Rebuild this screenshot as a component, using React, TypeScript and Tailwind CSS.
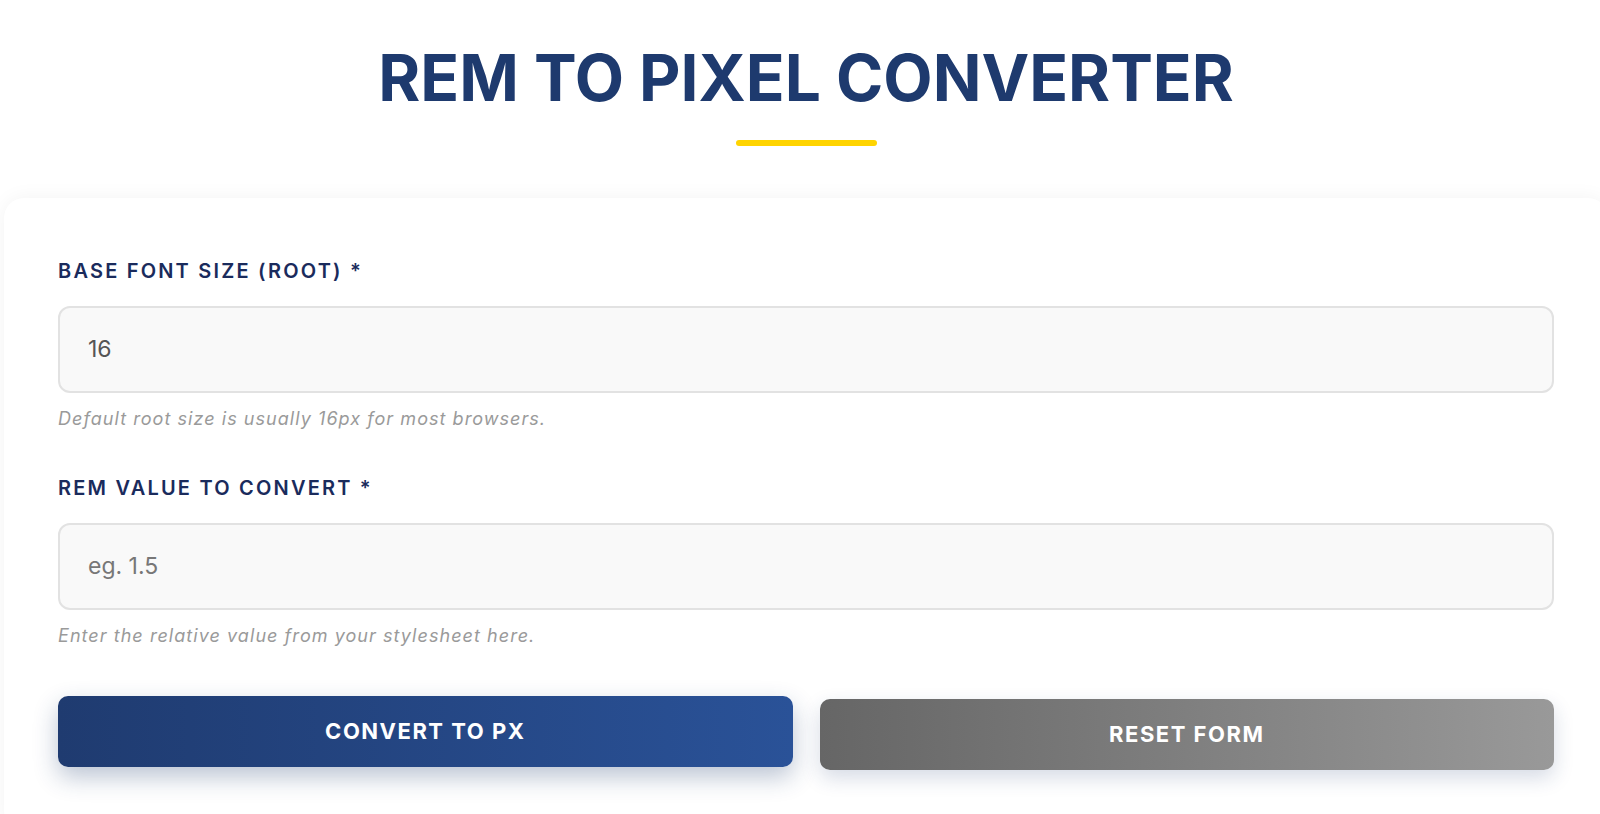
import React from 'react';

const font = { fontFamily: 'Inter, "Noto Sans", sans-serif' };

function Field({ label, value, placeholder, help }: { label: string; value?: string; placeholder?: string; help: string }) {
  return (
    <div className="flex flex-col">
      <label className="text-[20px] font-semibold tracking-[2.2px] text-[#1a2b5c] leading-none">{label}</label>
      <input
        defaultValue={value}
        placeholder={placeholder}
        className="mt-[25px] h-[87px] w-full rounded-[12px] border-2 border-[#e2e2e2] bg-[#f9f9f9] px-[28px] text-[23px] text-[#555] placeholder:text-[#777] outline-none"
      />
      <p className="mt-[17px] text-[18px] italic tracking-[1.05px] text-[#9a9a9a] leading-none">{help}</p>
    </div>
  );
}

export default function App() {
  return (
    <div className="h-screen w-full overflow-hidden bg-white" style={font}>
      <div className="w-[1612px]">
        <div className="pt-[40px]">
          <h1 className="text-center text-[64px] font-bold leading-[1.2] text-[#1e3a6e]">
            REM TO PIXEL CONVERTER
          </h1>
          <div className="mx-auto mt-[23px] h-[6px] w-[141px] rounded-full bg-[#ffd400]" />
        </div>
        <div className="mx-[4px] mt-[52px] rounded-[20px] bg-white px-[54px] pt-[63px] pb-[60px] shadow-[0_0_20px_rgba(0,0,0,0.05)]">
          <div className="flex flex-col gap-[50px]">
            <Field label="BASE FONT SIZE (ROOT) *" value="16" help="Default root size is usually 16px for most browsers." />
            <Field label="REM VALUE TO CONVERT *" placeholder="eg. 1.5" help="Enter the relative value from your stylesheet here." />
          </div>
          <div className="mt-[54px] grid grid-cols-2 gap-[27px]">
            <button className="h-[71px] -translate-y-[3px] rounded-[10px] bg-gradient-to-r from-[#1f3b70] to-[#2a5298] text-[22px] font-bold tracking-[1.5px] text-white shadow-[0_10px_25px_rgba(30,58,110,0.3)]">
              CONVERT TO PX
            </button>
            <button className="h-[71px] rounded-[10px] bg-gradient-to-r from-[#666666] to-[#999999] text-[22px] font-bold tracking-[1.5px] text-white shadow-[0_8px_20px_rgba(30,58,110,0.18)]">
              RESET FORM
            </button>
          </div>
        </div>
      </div>
    </div>
  );
}
